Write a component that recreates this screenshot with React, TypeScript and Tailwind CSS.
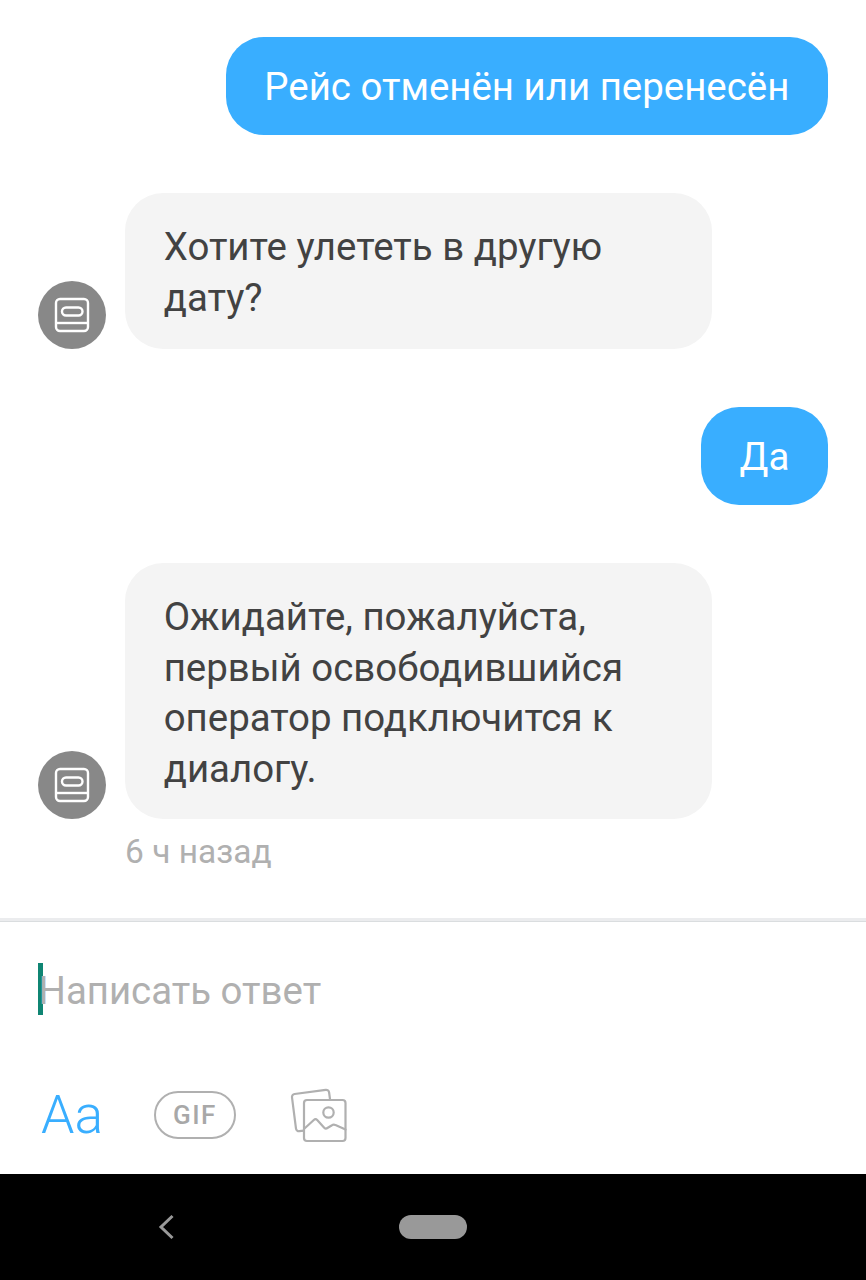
const messages = [
  { id: 1, mine: true, text: "Рейс отменён или перенесён" },
  { id: 2, mine: false, text: "Хотите улететь в другую дату?" },
  { id: 3, mine: true, text: "Да" },
  {
    id: 4,
    mine: false,
    text: "Ожидайте, пожалуйста, первый освободившийся оператор подключится к диалогу.",
  },
];

function BotAvatar() {
  return (
    <div className="w-[68px] h-[68px] shrink-0 rounded-full bg-[#888888] flex items-center justify-center">
      <svg width="36" height="36" viewBox="0 0 36 36" fill="none" stroke="#fff" strokeWidth="2.4">
        <rect x="2" y="2" width="32" height="32" rx="4" />
        <rect x="8" y="10.5" width="20.5" height="8" rx="4" />
        <path d="M2 26h32" />
      </svg>
    </div>
  );
}

function PhotosIcon() {
  return (
    <svg
      width="58"
      height="56"
      viewBox="0 0 58 56"
      fill="none"
      stroke="#b0b0b0"
      strokeWidth="2.2"
      strokeLinecap="round"
      strokeLinejoin="round"
    >
      <path d="M40 12l-.9-6.5a3 3 0 0 0-3.4-2.6L4.6 7a3 3 0 0 0-2.6 3.4l4 31.2a3 3 0 0 0 3.4 2.6l4.3-.6" />
      <rect x="14" y="13" width="41.5" height="41" rx="3" />
      <circle cx="38.5" cy="25.5" r="5.2" />
      <path d="M14.5 41.5l9.3-8.5c1.2-1.1 2.3-1.1 3.4 0l7 7.7c1 1 2 1.2 3.2.3l4.6-2.8c1.2-.8 2.2-.8 3.5-.1l10 4.4" />
    </svg>
  );
}

export default function App() {
  return (
    <div className="w-[866px] h-[1280px] bg-white overflow-hidden flex flex-col font-['Roboto',sans-serif]">
      {/* MESSAGES */}
      <div className="h-[918px] shrink-0 pt-[37px] pl-[38px] pr-[38px] flex flex-col">
        <div className="flex flex-col gap-[58px]">
          {messages.map((m) =>
            m.mine ? (
              <div
                key={m.id}
                className="self-end h-[98.4px] px-[38.7px] rounded-[38px] bg-[#39aeff] text-white text-[38.44px] leading-[99px] whitespace-nowrap"
              >
                {m.text}
              </div>
            ) : (
              <div key={m.id} className="flex items-end gap-[19px]">
                <BotAvatar />
                <div className="w-[587px] pl-[38.7px] pr-[39px] pt-[29px] pb-[25px] rounded-[38px] bg-[#f4f4f4] text-[#424242] text-[38.44px] leading-[50.6px]">
                  {m.text}
                </div>
              </div>
            )
          )}
        </div>

        <div className="mt-[12.5px] ml-[87px] text-[33.5px] leading-[40px] text-[#b0b0b0]">
          6 ч назад
        </div>
      </div>

      {/* COMPOSER */}
      <div className="h-[256px] shrink-0">
        <div className="h-[4px] bg-[#ebecee] border-b border-[#dadddf]" />

        <div className="mt-[41px] ml-[38px] h-[52px] flex items-center">
          <span className="w-[5px] h-[52px] bg-[#0f8573]" />
          <span className="-ml-[4.5px] pt-[4px] relative text-[38.4px] leading-[52px] text-[#b0b0b0]">
            Написать ответ
          </span>
        </div>

        <div className="mt-[72px] pl-[41px] h-[56px] flex items-center">
          <span className="w-[113px] text-[53.5px] leading-[56px] font-light text-[#39aeff]">
            Aa
          </span>
          <span className="w-[82px] h-[48px] rounded-full border-2 border-[#b0b0b0] flex items-center justify-center text-[26px] font-medium tracking-[1.5px] text-[#a8a8a8]">
            GIF
          </span>
          <span className="ml-[54px]">
            <PhotosIcon />
          </span>
        </div>
      </div>

      {/* SYSTEM NAVIGATION */}
      <div className="h-[106px] shrink-0 bg-black flex items-center">
        <svg
          className="ml-[158px]"
          width="18"
          height="26"
          viewBox="0 0 18 26"
          fill="none"
          stroke="#999"
          strokeWidth="3"
        >
          <path d="M14.5 2L3 13l11.5 11" />
        </svg>
        <span className="ml-[223px] w-[68px] h-[24px] rounded-full bg-[#999999]" />
      </div>
    </div>
  );
}
